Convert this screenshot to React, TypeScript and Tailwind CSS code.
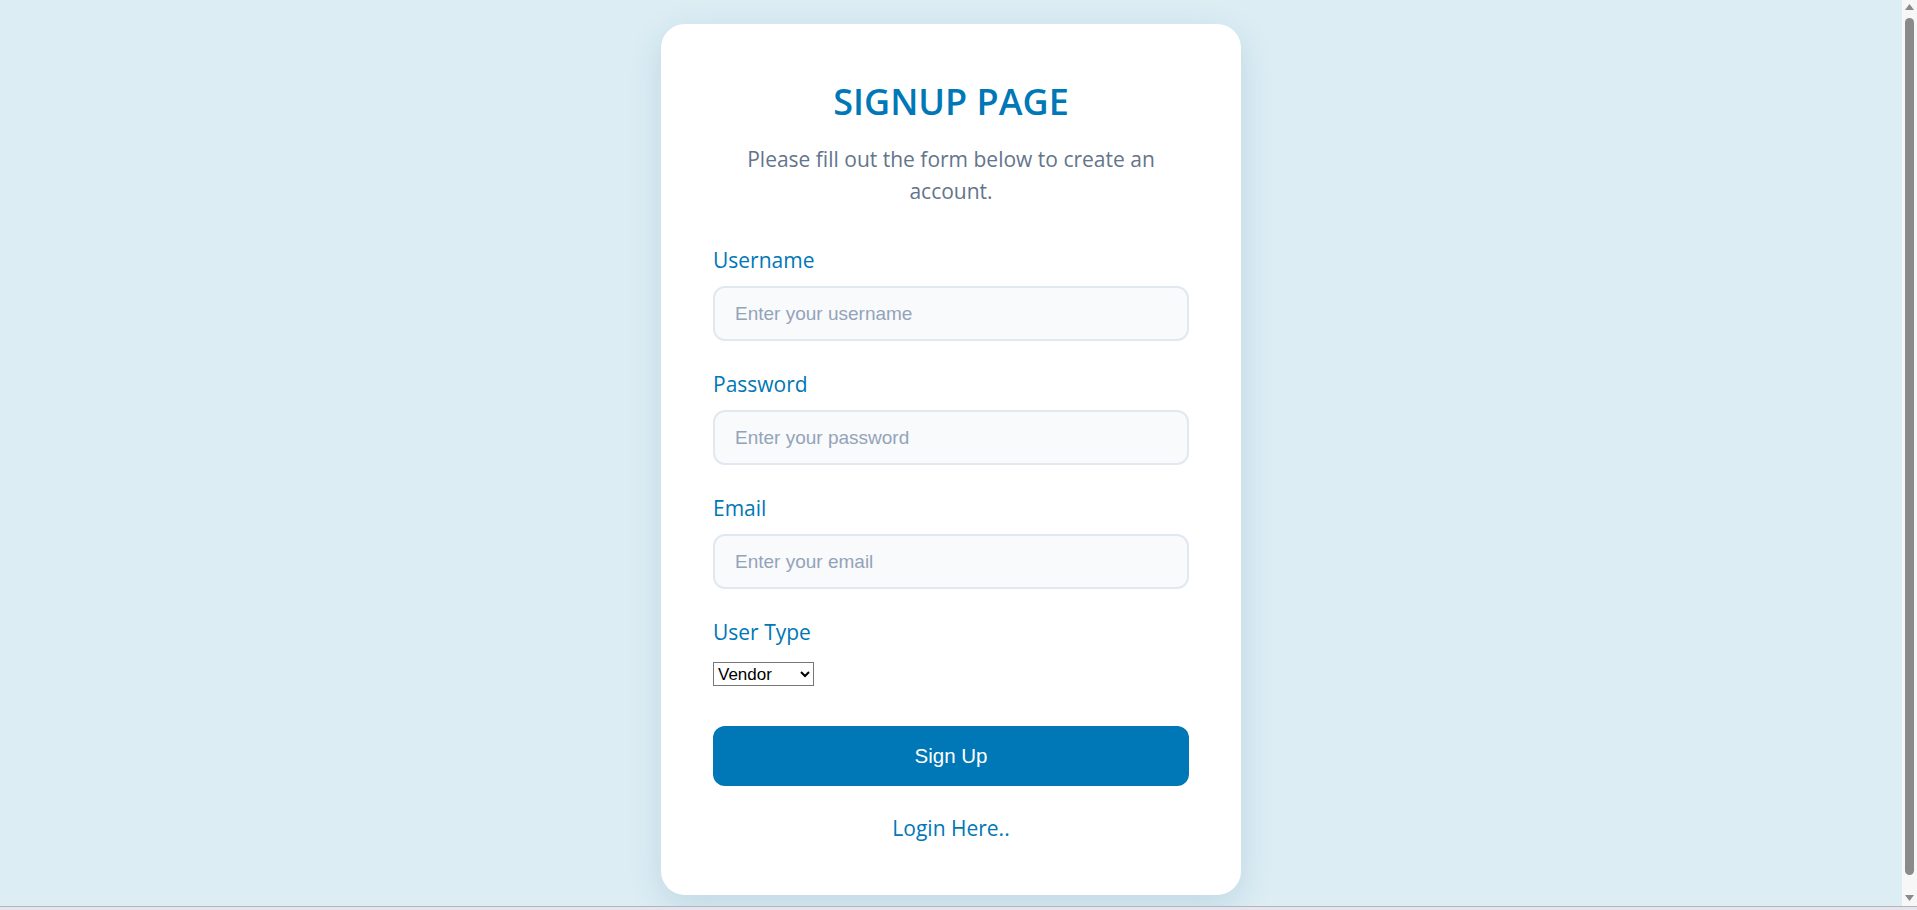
import React, { useState } from "react";

const labelCls =
  "block text-[21px] leading-[28px] font-medium text-[#0077b6] font-['Open_Sans',sans-serif]";
const inputCls =
  "mt-[12px] block w-full h-[55px] rounded-[12px] border-2 border-[#e2e8f0] bg-[#f8fafc] px-[20px] text-[19px] text-[#1e293b] placeholder:text-[#94a3b8] font-['Liberation_Sans',Arial,sans-serif] outline-none";

// browser-style scrollbar drawn over the right edge
const ScrollBar = () => (
  <div className="fixed top-0 right-0 h-[906px] w-[15px] bg-[#f7f7f7] flex flex-col items-center">
    <svg width="9" height="6" viewBox="0 0 9 6" className="mt-[4px]">
      <path d="M4.5 0 L9 6 L0 6 Z" fill="#8a8a8a" />
    </svg>
    <div className="mt-[8px] w-[9px] flex-1 rounded-full bg-[#8a8a8a]" />
    <svg width="9" height="6" viewBox="0 0 9 6" className="mt-[20px] mb-[5px]">
      <path d="M0 0 L9 0 L4.5 6 Z" fill="#8a8a8a" />
    </svg>
  </div>
);

const App = () => {
  const [userType, setUserType] = useState("vendor");

  return (
    <div className="min-h-screen bg-[#dcedf4] pr-[15px]">
      <div className="py-[24px] flex justify-center">
        <div className="w-[580px] rounded-[24px] bg-white shadow-[0_10px_34px_rgba(0,70,110,0.13)] px-[52px] pt-[57px] pb-[53px]">
          <h1 className="text-center text-[36px] leading-[42px] font-semibold text-[#0077b6] font-['Open_Sans',sans-serif]">
            SIGNUP PAGE
          </h1>
          <p className="mt-[20px] text-center text-[21px] leading-[32px] text-[#64748b] font-['Open_Sans',sans-serif] px-[28px]">
            Please fill out the form below to create an account.
          </p>

          <form className="mt-[39px]" onSubmit={(e) => e.preventDefault()}>
            <label className={labelCls}>Username</label>
            <input type="text" placeholder="Enter your username" className={inputCls} />

            <label className={labelCls + " mt-[29px]"}>Password</label>
            <input type="password" placeholder="Enter your password" className={inputCls} />

            <label className={labelCls + " mt-[29px]"}>Email</label>
            <input type="email" placeholder="Enter your email" className={inputCls} />

            <label className={labelCls + " mt-[29px]"}>User Type</label>
            <select
              value={userType}
              onChange={(e) => setUserType(e.target.value)}
              className="mt-[16px] block w-[101px] h-[24px] border border-[#767676] bg-white text-[17px] text-black font-['Liberation_Sans',Arial,sans-serif] appearance-auto"
            >
              <option value="vendor">Vendor</option>
              <option value="customer">Customer</option>
            </select>

            <button
              type="submit"
              className="mt-[40px] block w-full h-[60px] rounded-[12px] bg-[#0077b6] text-white text-[20.5px] font-['Liberation_Sans',Arial,sans-serif]"
            >
              Sign Up
            </button>
          </form>

          <div className="mt-[28px] text-center">
            <a
              href="#"
              className="text-[21px] leading-[28px] font-medium text-[#0077b6] font-['Open_Sans',sans-serif]"
            >
              Login Here..
            </a>
          </div>
        </div>
      </div>
      <ScrollBar />
      <div className="fixed left-0 right-0 top-[906px] h-[4px] border-t border-[#b4b4bc] bg-[#e8e4ee]" />
    </div>
  );
};

export default App;
